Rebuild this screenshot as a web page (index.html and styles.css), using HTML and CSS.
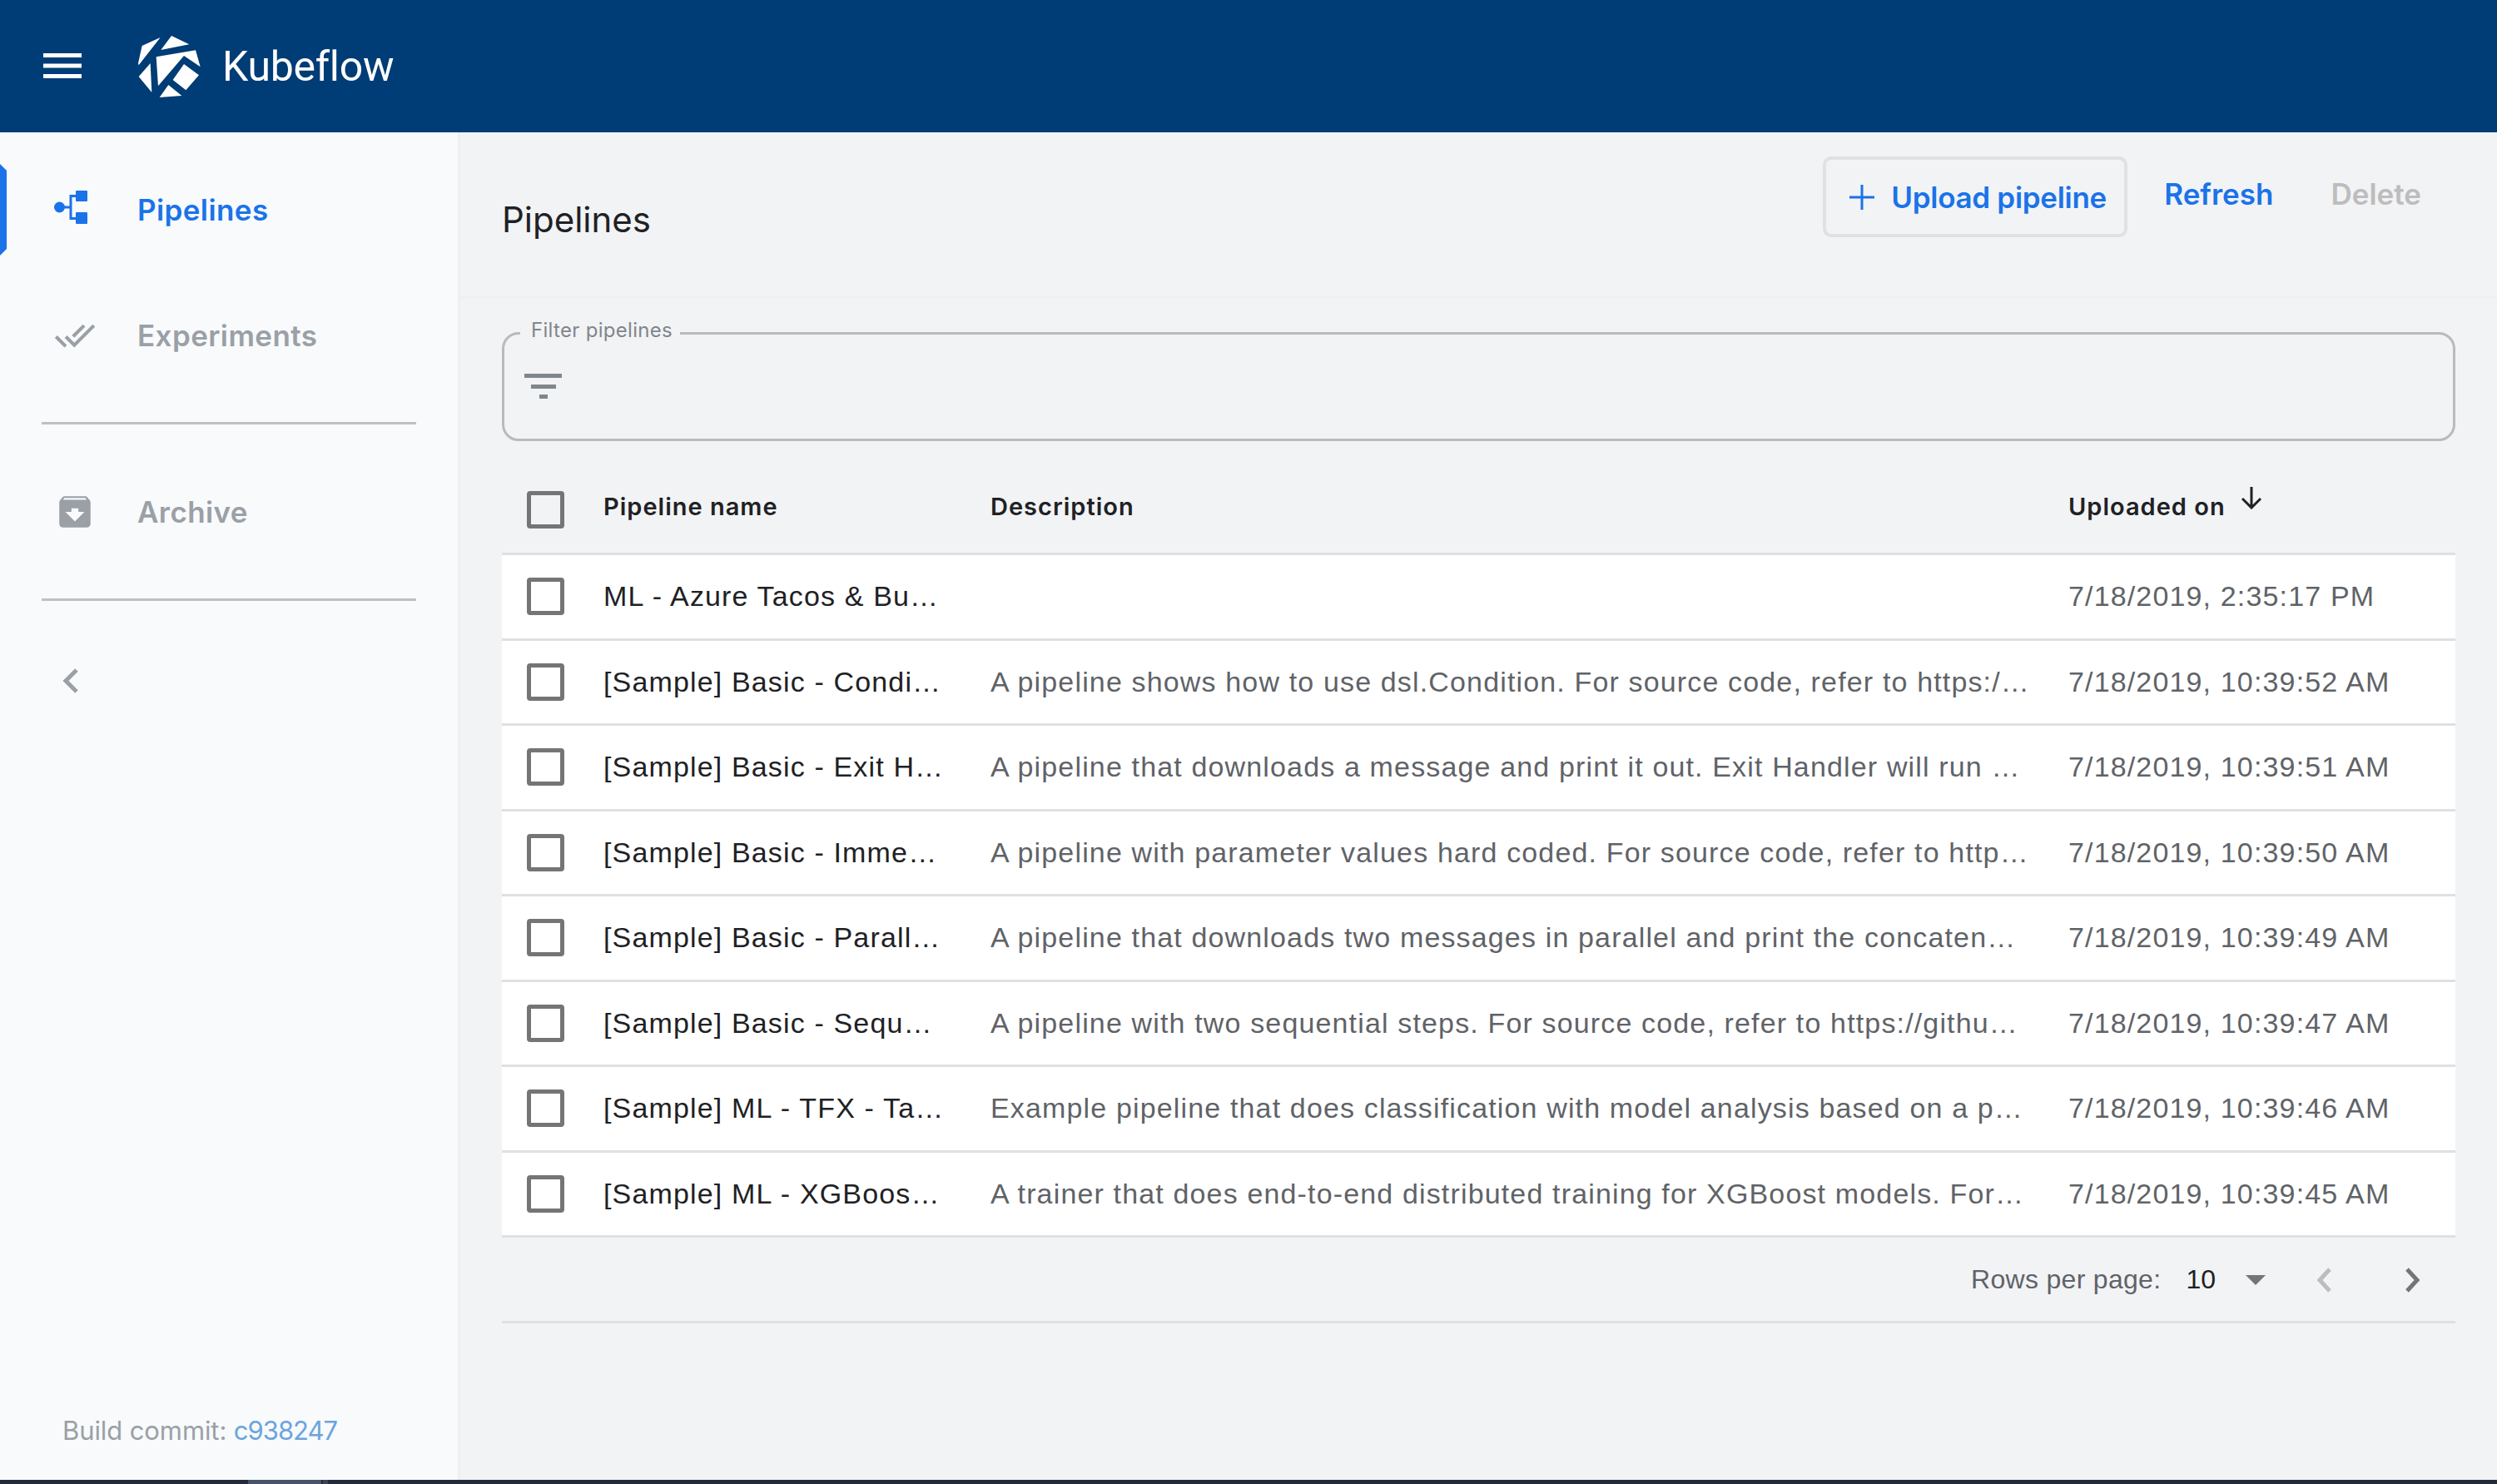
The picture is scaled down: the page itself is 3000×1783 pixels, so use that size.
FILE: index.html
```html
<!DOCTYPE html>
<html lang="en">
<head>
  <meta charset="UTF-8">
  <title>Kubeflow Pipelines</title>
  <link rel="stylesheet" href="styles.css">
</head>
<body>
  <header class="topbar">
    <svg class="menu-icon" viewBox="0 0 46 30"><path d="M0 0h46v5H0zM0 12.500h46v5H0zM0 25h46v5H0z"/></svg>
    <svg class="logo" viewBox="78 66 225 222"><path d="M92 102 158 72 80 172 78 165zM198 66 262 97 160 117zM143 142 285 118 302 178 243 138 150 247zM243 168 297 208 250 262 203 225zM122 165 127 270 80 213zM187 243 235 282 155 288z"/></svg>
    <span class="brand">Kubeflow</span>
  </header>

  <div class="layout">
    <nav class="sidebar">
      <a class="nav-item active">
        <span class="nav-icon">
          <svg class="pipelines-icon" viewBox="0 0 40 40"><circle cx="6.500" cy="20" r="6.500"/><rect x="26" width="14" height="13" rx="1"/><rect x="26" y="26" width="14" height="14" rx="1"/><path class="pipelines-links" d="M12 20h8M28 6.500h-8v27h8"/></svg>
        </span>
        <span>Pipelines</span>
      </a>
      <a class="nav-item">
        <span class="nav-icon">
          <svg class="icon-50" viewBox="0 0 24 24"><path d="M18 7l-1.410-1.410-6.340 6.340 1.410 1.410L18 7zm4.240-1.410L11.660 16.170 7.480 12l-1.410 1.410L11.660 19l12-12-1.420-1.410zM.41 13.410L6 19l1.410-1.410L1.830 12 .41 13.410z"/></svg>
        </span>
        <span>Experiments</span>
      </a>
      <hr class="nav-divider">
      <a class="nav-item">
        <span class="nav-icon">
          <svg class="icon-50" viewBox="0 0 24 24"><path d="M20.540 5.230l-1.390-1.680C18.880 3.210 18.470 3 18 3H6c-.47 0-.88.21-1.160.55L3.460 5.230C3.170 5.570 3 6.020 3 6.500V19c0 1.100.9 2 2 2h14c1.100 0 2-.9 2-2V6.500c0-.48-.17-.93-.46-1.270zM12 17.500L6.500 12H10v-2h4v2h3.500L12 17.500zM5.120 5l.81-1h12l.94 1H5.120z"/></svg>
        </span>
        <span>Archive</span>
      </a>
      <hr class="nav-divider">
      <svg class="collapse" viewBox="0 0 19 30"><path d="M17 2 4 15l13 13"/></svg>
      <div class="build">Build commit: <a class="build-link">c938247</a></div>
    </nav>

    <main class="content">
      <div class="toolbar">
        <h1 class="page-title">Pipelines</h1>
        <div class="actions">
          <button class="btn btn-upload"><svg class="plus" viewBox="0 0 30 30"><path d="M13.500 0h3v13.500H30v3H16.500V30h-3V16.500H0v-3h13.500z"/></svg>Upload pipeline</button>
          <button class="btn btn-refresh">Refresh</button>
          <button class="btn btn-delete">Delete</button>
        </div>
      </div>

      <fieldset class="filter">
        <legend>Filter pipelines</legend>
        <svg class="filter-icon" viewBox="0 0 45 30"><path d="M0 0h45v5H0zM8 13h30v5H8zM18 25h10v5H18z"/></svg>
      </fieldset>

      <div class="table">
        <div class="row head">
          <span class="check"></span>
          <span class="head-label">Pipeline name</span>
          <span class="head-label">Description</span>
          <span class="head-label sorted">Uploaded on <svg class="sort-arrow" viewBox="0 0 26 27"><path d="M13 0v25M2 14l11 11 11-11"/></svg></span>
        </div>
        <div class="row">
          <span class="check"></span>
          <span class="name">ML - Azure Tacos &amp; Bu…</span>
          <span class="desc"></span>
          <span class="desc">7/18/2019, 2:35:17 PM</span>
        </div>
        <div class="row">
          <span class="check"></span>
          <span class="name">[Sample] Basic - Condi…</span>
          <span class="desc">A pipeline shows how to use dsl.Condition. For source code, refer to https:/…</span>
          <span class="desc">7/18/2019, 10:39:52 AM</span>
        </div>
        <div class="row">
          <span class="check"></span>
          <span class="name">[Sample] Basic - Exit H…</span>
          <span class="desc">A pipeline that downloads a message and print it out. Exit Handler will run …</span>
          <span class="desc">7/18/2019, 10:39:51 AM</span>
        </div>
        <div class="row">
          <span class="check"></span>
          <span class="name">[Sample] Basic - Imme…</span>
          <span class="desc">A pipeline with parameter values hard coded. For source code, refer to http…</span>
          <span class="desc">7/18/2019, 10:39:50 AM</span>
        </div>
        <div class="row">
          <span class="check"></span>
          <span class="name">[Sample] Basic - Parall…</span>
          <span class="desc">A pipeline that downloads two messages in parallel and print the concaten…</span>
          <span class="desc">7/18/2019, 10:39:49 AM</span>
        </div>
        <div class="row">
          <span class="check"></span>
          <span class="name">[Sample] Basic - Sequ…</span>
          <span class="desc">A pipeline with two sequential steps. For source code, refer to https://githu…</span>
          <span class="desc">7/18/2019, 10:39:47 AM</span>
        </div>
        <div class="row">
          <span class="check"></span>
          <span class="name">[Sample] ML - TFX - Ta…</span>
          <span class="desc">Example pipeline that does classification with model analysis based on a p…</span>
          <span class="desc">7/18/2019, 10:39:46 AM</span>
        </div>
        <div class="row">
          <span class="check"></span>
          <span class="name">[Sample] ML - XGBoos…</span>
          <span class="desc">A trainer that does end-to-end distributed training for XGBoost models. For…</span>
          <span class="desc">7/18/2019, 10:39:45 AM</span>
        </div>
      </div>

      <div class="pager">
        <span class="pager-label">Rows per page:</span>
        <span class="pager-value">10</span>
        <span class="pager-caret"></span>
        <svg class="chev chev-off" viewBox="0 0 18 30"><path d="M16 2 4 15l12 13"/></svg>
        <svg class="chev" viewBox="0 0 18 30"><path d="M2 2l12 13L2 28"/></svg>
      </div>
    </main>
  </div>

  <div class="taskbar"><span class="thumb"></span><span class="thumb-small"></span></div>
</body>
</html>
```

FILE: styles.css
```css
* {
  box-sizing: border-box;
}
html, body {
  height: 100%;
}
body {
  margin: 0;
  display: flex;
  flex-direction: column;
  overflow: hidden;
  background: #f2f3f5;
  color: #202124;
  font-family: Roboto, sans-serif;
}

/* top bar */
.topbar {
  height: 159px;
  flex: none;
  display: flex;
  align-items: center;
  background: #003c75;
  padding-left: 52px;
}
.menu-icon {
  width: 46px;
  height: 30px;
  margin-top: -2px;
  fill: #fff;
}
.logo {
  width: 75px;
  height: 74px;
  margin-left: 68px;
  fill: #fff;
}
.brand {
  margin-left: 26px;
  font-size: 50px;
  font-weight: 400;
  color: #fff;
  letter-spacing: -0.3px;
}

.layout {
  flex: 1;
  display: flex;
  min-height: 0;
}

/* sidebar */
.sidebar {
  width: 553px;
  flex: none;
  display: flex;
  flex-direction: column;
  padding-top: 38px;
  background: #f8fafc;
  border-right: 3px solid #eeeff1;
}
.nav-item {
  position: relative;
  height: 110px;
  flex: none;
  display: flex;
  align-items: center;
  padding-left: 65px;
  font-family: Inter, sans-serif;
  font-size: 35px;
  font-weight: 600;
  letter-spacing: 0.4px;
  color: #9aa0a6;
  fill: #9aa0a6;
}
.nav-item + .nav-item {
  margin-top: 41px;
}
.nav-item.active {
  color: #1a73e8;
  fill: #1a73e8;
}
.nav-item.active::before {
  content: "";
  position: absolute;
  left: 0;
  top: 0;
  width: 8px;
  height: 100%;
  background: #1a73e8;
  clip-path: polygon(0 0, 100% 8px, 100% calc(100% - 8px), 0 100%);
}
.nav-icon {
  width: 50px;
  margin-right: 50px;
  display: flex;
  align-items: center;
}
.pipelines-icon {
  width: 40px;
  height: 40px;
  margin-top: -6px;
}
.pipelines-links {
  fill: none;
  stroke: #1a73e8;
  stroke-width: 3;
}
.icon-50 {
  width: 50px;
  height: 50px;
}
.nav-divider {
  width: 450px;
  height: 3px;
  margin: 49px 0 50px 50px;
  border: 0;
  background: #bdc1c6;
  flex: none;
}
.collapse {
  width: 19px;
  height: 30px;
  margin: 31px 0 0 75px;
  flex: none;
  fill: none;
  stroke: #9aa0a6;
  stroke-width: 5;
}
.build {
  margin: auto 0 41px 75px;
  font-family: Inter, sans-serif;
  font-size: 31px;
  color: #9aa0a6;
  letter-spacing: -0.1px;
}
.build-link {
  color: #6aa5dc;
  letter-spacing: -1px;
}

/* main area */
.content {
  flex: 1;
  min-width: 0;
  display: flex;
  flex-direction: column;
}
.toolbar {
  height: 200px;
  flex: none;
  display: flex;
  align-items: flex-start;
  padding: 29px 91px 0 50px;
  border-bottom: 3px solid #eff0f2;
}
.page-title {
  margin: 51px 0 0;
  font-family: Inter, sans-serif;
  font-size: 42px;
  line-height: 50px;
  font-weight: 400;
  color: #202124;
}
.actions {
  margin-left: auto;
  display: flex;
  align-items: flex-start;
}
.btn {
  padding: 0;
  border: 0;
  background: none;
  font-family: Inter, sans-serif;
  font-size: 35px;
  font-weight: 600;
  color: #1a73e8;
}
.btn-upload {
  width: 366px;
  height: 97px;
  display: flex;
  align-items: center;
  padding: 0 0 0 28px;
  border: 4px solid #e0e1e2;
  border-radius: 10px;
  letter-spacing: -0.3px;
}
.plus {
  width: 30px;
  height: 30px;
  margin-right: 20px;
  fill: #1a73e8;
}
.btn-refresh {
  margin: 24px 0 0 44px;
  line-height: 42px;
}
.btn-delete {
  margin: 24px 0 0 69px;
  line-height: 42px;
  color: #bdbdbd;
}

.filter {
  height: 148px;
  margin: 23px 50px 30px;
  padding: 31px 0 0 23px;
  display: flex;
  align-items: flex-start;
  border: 3px solid #b9babc;
  border-radius: 20px;
}
.filter legend {
  margin-left: -4px;
  padding: 0 9px 6px 13px;
  font-family: Inter, sans-serif;
  font-size: 24px;
  line-height: 30px;
  color: #80868b;
  letter-spacing: 0.3px;
}
.filter-icon {
  width: 45px;
  height: 30px;
  margin-left: 1px;
  fill: #80868b;
}

/* table */
.table {
  margin: 0 50px;
}
.row {
  display: grid;
  grid-template-columns: 122px 465px 1295px 1fr;
  align-items: center;
  height: 102.500px;
  background: #fff;
  border-bottom: 3px solid #dfe0e1;
  font-family: "Liberation Sans", sans-serif;
  font-size: 34px;
  letter-spacing: 1.150px;
  white-space: nowrap;
  overflow: hidden;
}
.row.head {
  height: 107px;
  background: none;
  font-family: Inter, sans-serif;
  font-size: 29px;
  font-weight: 600;
  letter-spacing: 1px;
}
.head-label {
  padding-bottom: 7px;
}
.check {
  width: 45px;
  height: 45px;
  margin-left: 30px;
  background: #fff;
  border: 5px solid #757575;
  border-radius: 4px;
}
.head .check {
  background: none;
}
.desc {
  color: #5f6368;
}
.sorted {
  display: flex;
  align-items: center;
  gap: 18px;
}
.sort-arrow {
  width: 26px;
  height: 27px;
  margin-top: -20px;
  fill: none;
  stroke: #202124;
  stroke-width: 3;
}

/* pager */
.pager {
  height: 102.500px;
  margin: 0 50px;
  flex: none;
  display: flex;
  align-items: center;
  justify-content: flex-end;
  padding: 2px 42px 0 0;
  border-bottom: 3px solid #dfe0e1;
  font-family: "Liberation Sans", sans-serif;
  font-size: 32px;
}
.pager-label {
  color: #5f6368;
  letter-spacing: 0.3px;
}
.pager-value {
  margin-left: 30px;
  color: #202124;
}
.pager-caret {
  margin-left: 36px;
  border-left: 12px solid transparent;
  border-right: 12px solid transparent;
  border-top: 12px solid #757575;
}
.chev {
  width: 18px;
  height: 30px;
  fill: none;
  stroke: #757575;
  stroke-width: 5;
  margin-left: 89px;
}
.chev-off {
  margin-left: 61px;
  stroke: #bdbdbd;
}

.taskbar {
  height: 5px;
  flex: none;
  display: flex;
  gap: 2px;
  padding-left: 298px;
  background: #232b3b;
}
.thumb {
  width: 88px;
  background: #475467;
}
.thumb-small {
  width: 6px;
  background: #3a4456;
}
```
